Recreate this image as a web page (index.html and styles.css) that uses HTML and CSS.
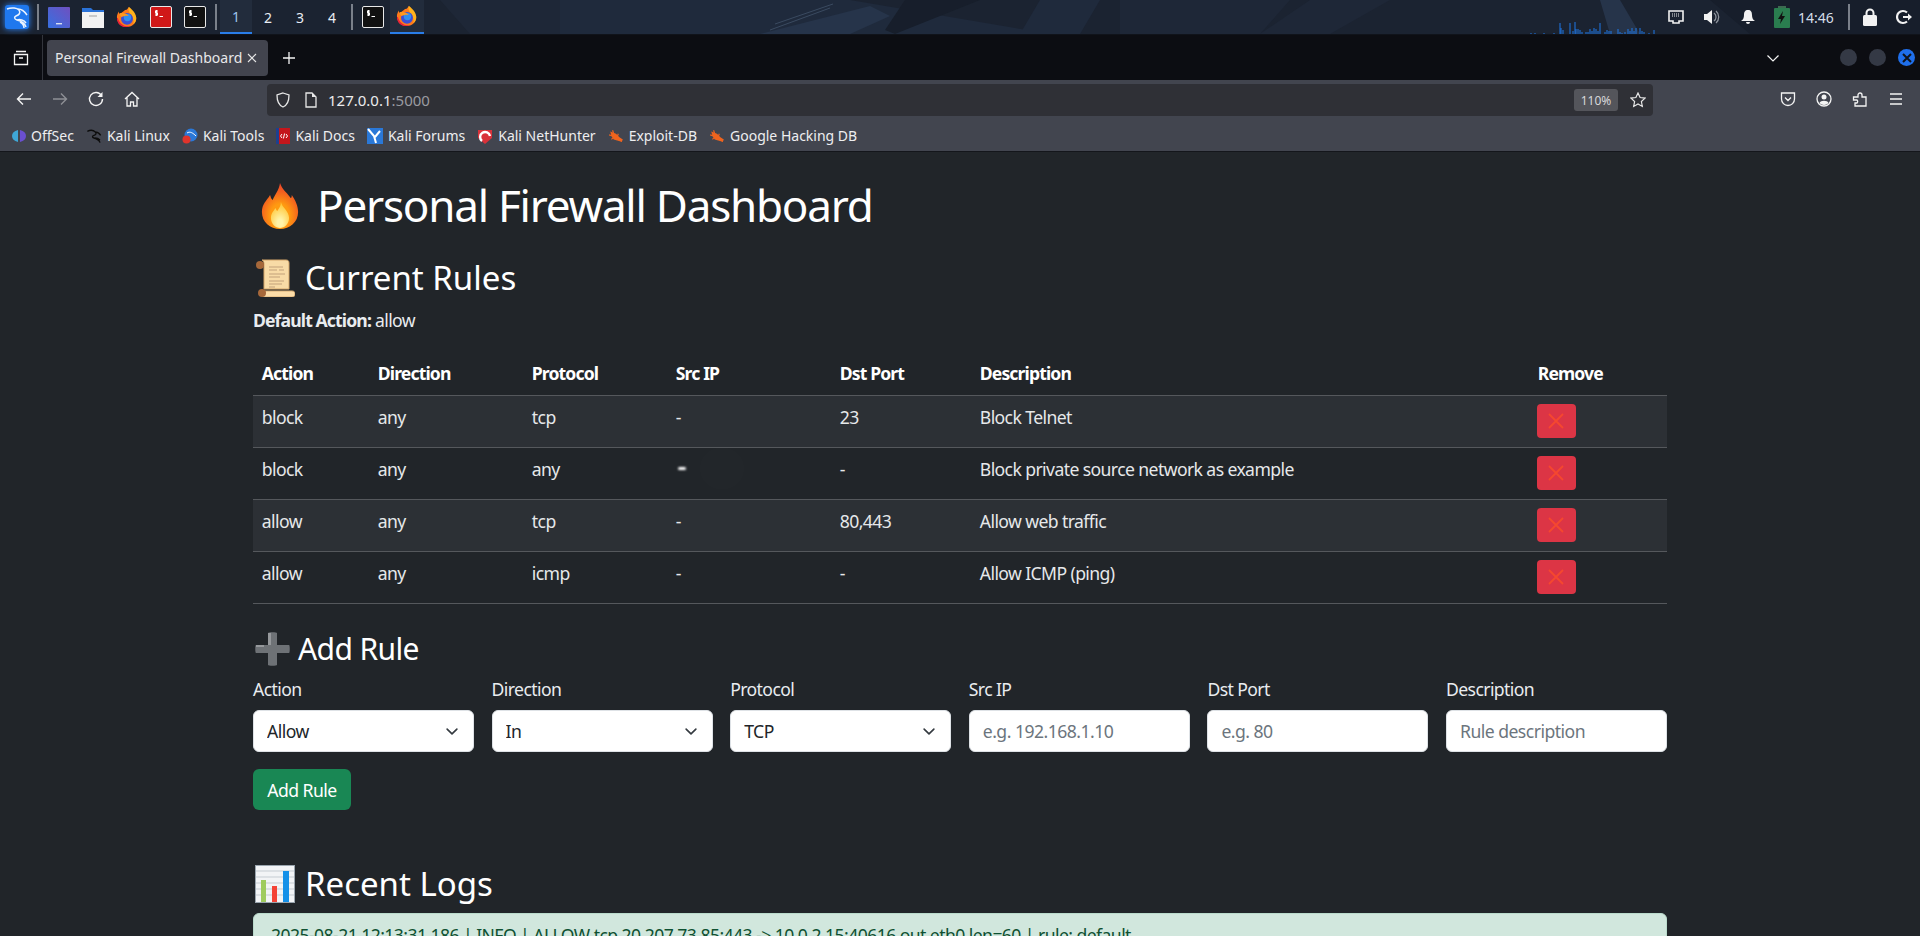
FILE: index.html
```html
<!DOCTYPE html>
<html lang="en">
<head>
  <meta charset="UTF-8" />
  <meta name="viewport" content="width=device-width, initial-scale=1.0"/>
  <title>Personal Firewall Dashboard</title>
  <link rel="stylesheet" href="styles.css">
</head>
<body>
  <svg class="defs" width="0" height="0">
    <symbol id="firefox" viewBox="0 0 24 24">
      <path fill="#ff7a1a" d="M14 1c3 2 2 4 4 6 2 2 3 3 4 5 1 6-4 11-10 11S1 19 1 12c0-2 1-4 2-6 0 2 1 3 2 3 1-3 4-3 5-5 1 1 3-1 4-3z"/>
      <path fill="#ffb21c" d="M14 1c4 3 8 7 8 12 0 3-1 5-3 7 1-5-1-9-4-12-1-2-2-5-1-7z"/>
      <path fill="#e8203c" d="M2 13c2 7 8 10 13 9-6 3-14-1-14-9z"/>
      <circle cx="12" cy="14" r="6.5" fill="#3c4fd6"/>
      <circle cx="12.5" cy="12.5" r="4" fill="#2f8ff0"/>
      <path fill="#ff9a1f" d="M4 8c3-1 8 0 10 3-3-1-5 0-8 1-1-1-2-2-2-4z"/>
    </symbol>
    <symbol id="term" viewBox="0 0 22 22">
      <rect x=".5" y=".5" width="21" height="21" rx="1.5" fill="currentColor" stroke="#e8e8e8"/>
      <path fill="none" stroke="#fff" stroke-width="1.2" d="M6.5 4v6M8 5H5.6v2h1.8v2H5M9.5 10.5h3.5"/>
    </symbol>
    <symbol id="x" viewBox="0 0 16 16">
      <path fill="none" stroke="#f5472f" stroke-width="1.800" d="M1 1l14 14M15 1L1 15"/>
    </symbol>
    <symbol id="bug" viewBox="0 0 14 14">
      <path fill="#f0641e" d="M2 3l5 2 3 3 3 2-1 2-4-1-3-1-2-3z"/>
      <path fill="none" stroke="#f0641e" d="M4 2l1 3M1 6l3 1M3 10l2-2M9 5l-1 3M12 12l-3-3"/>
    </symbol>
    <symbol id="dragon" viewBox="0 0 24 24">
      <path fill="none" stroke="currentColor" stroke-width="2" d="M2 5c4-2 9-2 12 1 2 2 1 4-2 5-3 1-3 3 0 4 4 1 8 3 9 7M14 6c3 0 6 2 8 5M13 15c3 0 6 1 8 3"/>
    </symbol>
  </svg>

  <div class="panel">
    <svg class="wallpaper" viewBox="0 0 1920 34" preserveAspectRatio="none">
      <rect width="1920" height="34" fill="#1b2331"/>
      <path fill="#1f2a3c" d="M560 0h240l-60 34H560zM740 0h110l200 34H720zM1040 0h60l-20 34h-60z"/>
      <path fill="#1e2737" d="M440 0h120v34H470zM1120 0h170l-30 34h-140zM1310 0h80l-60 34h-70z"/>
      <path fill="#26344a" d="M760 34l110-28 20 10-40 18zM1600 0h20l20 34h-30z"/>
      <path fill="#171e2b" d="M905 0h75l-20 8-65 26-10-4zM1710 0h210v34h-170z"/>
      <path fill="none" stroke="#3a4a60" d="M770 30l60-22M775 24l58-20"/>
    </svg>
    <button class="kali-btn">
      <svg width="24" height="24" viewBox="0 0 24 24"><rect width="24" height="24" rx="3" fill="#1f78ee"/><path fill="none" stroke="#eaf3ff" stroke-width="1.500" d="M2 4c5-2 10-1 12 1 2 3 0 5-3 6-2 1-2 3 1 4 4 1 8 3 9 7M13 4c4 0 7 3 9 6M12 15c3-1 7 0 9 3M15 17c2 1 4 3 4 6"/></svg>
    </button>
    <span class="panel-sep"></span>
    <span class="launcher">
      <svg width="22" height="22" viewBox="0 0 22 22"><defs><linearGradient id="desk" x1="0" x2="1" y1="1" y2="0"><stop offset="0" stop-color="#3770e0"/><stop offset="1" stop-color="#6f50c0"/></linearGradient></defs><rect width="22" height="21" y="1" rx="1" fill="url(#desk)"/><path fill="#d8e0f0" d="M8 17h6v1.400H8z"/></svg>
    </span>
    <span class="launcher">
      <svg width="22" height="22" viewBox="0 0 22 22"><path fill="#2a72d8" d="M0 2h9l2 2h11v6H0z"/><path fill="#f2f2f2" d="M0 6h22v16H0z"/><path fill="#c9c9c9" d="M7 9h8v2H7z"/></svg>
    </span>
    <span class="launcher"><svg width="22" height="22"><use href="#firefox"/></svg></span>
    <span class="launcher red"><svg width="22" height="22"><use href="#term"/></svg></span>
    <span class="launcher dark"><svg width="22" height="22"><use href="#term"/></svg></span>
    <span class="panel-sep"></span>
    <div class="workspaces">
      <span class="ws active">1</span>
      <span class="ws">2</span>
      <span class="ws">3</span>
      <span class="ws">4</span>
    </div>
    <span class="panel-sep"></span>
    <span class="launcher dark"><svg width="22" height="22"><use href="#term"/></svg></span>
    <span class="launcher current"><svg width="22" height="22"><use href="#firefox"/></svg></span>

    <div class="tray">
      <svg class="netgraph" width="125" height="12" viewBox="0 0 125 12">
        <path fill="none" stroke="#1f78e8" d="M1 11v1M5 11v1M14 11v1M24 11v1M30 1v11M31 6v6M33 8v4M40 1v11M43 9v3M45 0v12M46 7v5M48 7v5M50 8v4M52 10v2M56 10v2M58 10v2M60 7v5M62 9v3M64 6v6M66 7v5M68 9v3M70 1v11M75 10v2M77 8v4M79 9v3M81 9v3M88 7v5M90 10v2M92 11v1M95 10v2M98 7v5M100 9v3M102 6v6M104 9v3M106 6v6M110 6v6M112 9v3M114 10v2M119 11v1M124 8v4"/>
      </svg>
      <span class="tray-item">
        <svg width="16" height="16" viewBox="0 0 16 16"><path fill="none" stroke="#f2f2f2" stroke-width="1.600" d="M1 2h14v10h-4v2H5v-2H1z"/><path stroke="#f2f2f2" d="M4 5h8M4 7h8" stroke-dasharray="1 1"/></svg>
      </span>
      <span class="tray-item">
        <svg width="18" height="18" viewBox="0 0 18 18"><path fill="#f2f2f2" d="M1 6h3l5-4v14l-5-4H1z"/><path fill="none" stroke="#8d939c" stroke-width="1.300" d="M11 5a5 5 0 0 1 0 8M13 3a8 8 0 0 1 0 12"/></svg>
      </span>
      <span class="tray-item">
        <svg width="16" height="16" viewBox="0 0 16 16"><path fill="#f2f2f2" d="M8 1c3 0 4 2 4 5 0 3 1 5 3 6H1c2-1 3-3 3-6 0-3 1-5 4-5zM6 13h4a2 2 0 0 1-4 0z"/></svg>
      </span>
      <span class="tray-item batt">
        <svg width="16" height="22" viewBox="0 0 16 22"><path fill="#3d6a50" d="M4 0h8v2H4z"/><rect y="2" width="16" height="20" rx="1" fill="#2a7d4f"/><path fill="#111" d="M9 5l-5 8h3l-1 5 5-8H8z"/></svg>
      </span>
      <span class="clock">14:46</span>
      <span class="panel-sep tray-sep"></span>
      <span class="tray-item">
        <svg width="14" height="18" viewBox="0 0 14 18"><path fill="none" stroke="#f2f2f2" stroke-width="2" d="M3.500 8V5a3.500 3.500 0 0 1 7 0v3"/><rect y="7" width="14" height="11" rx="1.500" fill="#f2f2f2"/></svg>
      </span>
      <span class="tray-item last">
        <svg width="16" height="16" viewBox="0 0 16 16"><path fill="none" stroke="#f2f2f2" stroke-width="2.200" d="M11 3.500a6 6 0 1 0 0 9"/><path fill="#f2f2f2" d="M7 7h5V4.500L16 8l-4 3.500V9H7z"/></svg>
      </span>
    </div>
  </div>

  <div class="tabbar">
    <span class="tab-view">
      <svg width="16" height="16" viewBox="0 0 16 16"><path fill="none" stroke="#f4f4f4" stroke-width="1.300" d="M3 1.500h10M1.500 4.500h13v10h-13zM6 8h4"/></svg>
    </span>
    <div class="tab">
      <span class="tab-title">Personal Firewall Dashboard</span>
      <svg width="10" height="10" viewBox="0 0 10 10"><path fill="none" stroke="#e6e6e6" stroke-width="1.100" d="M1 1l8 8M9 1L1 9"/></svg>
    </div>
    <svg class="new-tab" width="14" height="14" viewBox="0 0 14 14"><path fill="none" stroke="#f4f4f4" stroke-width="1.300" d="M7 1v12M1 7h12"/></svg>
    <svg class="tab-list" width="14" height="14" viewBox="0 0 14 14"><path fill="none" stroke="#f4f4f4" stroke-width="1.200" d="M1.500 4.500L7 10l5.500-5.500"/></svg>
    <span class="win-btn"></span>
    <span class="win-btn"></span>
    <span class="win-btn close">
      <svg width="10" height="10" viewBox="0 0 10 10"><path fill="none" stroke="#10141c" stroke-width="2" d="M1 1l8 8M9 1L1 9"/></svg>
    </span>
  </div>

  <div class="navbar">
    <span class="nav-btn"><svg width="16" height="16" viewBox="0 0 16 16"><path fill="none" stroke="#f4f4f4" stroke-width="1.400" d="M15 8H2M7 2.500L1.500 8 7 13.500"/></svg></span>
    <span class="nav-btn"><svg width="16" height="16" viewBox="0 0 16 16"><path fill="none" stroke="#8e9096" stroke-width="1.400" d="M1 8h13M9 2.500L14.500 8 9 13.500"/></svg></span>
    <span class="nav-btn"><svg width="16" height="16" viewBox="0 0 16 16"><path fill="none" stroke="#f4f4f4" stroke-width="1.400" d="M13.500 4.500A6.500 6.500 0 1 0 14.500 8"/><path fill="#f4f4f4" d="M14.500 1v5h-5z"/></svg></span>
    <span class="nav-btn"><svg width="16" height="16" viewBox="0 0 16 16"><path fill="none" stroke="#f4f4f4" stroke-width="1.300" d="M1 8l7-6.500L15 8M3 6.500V15h3.500v-4h3v4H13V6.500"/></svg></span>
    <div class="urlbar">
      <svg class="url-shield" width="16" height="16" viewBox="0 0 16 16"><path fill="none" stroke="#e8e8e8" stroke-width="1.300" d="M8 1l6 2c0 6-1 10-6 12C3 13 2 9 2 3z"/></svg>
      <svg class="url-page" width="14" height="16" viewBox="0 0 14 16"><path fill="none" stroke="#e8e8e8" stroke-width="1.300" d="M2 1h6l4 4v10H2z"/><path fill="#e8e8e8" d="M8 1l4 4H8z"/></svg>
      <span class="url-text">127.0.0.1<span class="url-port">:5000</span></span>
      <span class="zoom-badge">110%</span>
      <svg class="url-star" width="16" height="16" viewBox="0 0 16 16"><path fill="none" stroke="#e8e8e8" stroke-width="1.200" d="M8 1l2.100 4.500 4.900.6-3.600 3.400.9 4.900L8 12l-4.300 2.400.9-4.900L1 6.100l4.900-.6z"/></svg>
    </div>
    <span class="nav-btn"><svg width="16" height="16" viewBox="0 0 16 16"><path fill="none" stroke="#f4f4f4" stroke-width="1.300" d="M1.500 2h13v6a6.500 6.500 0 0 1-13 0zM5 6.500L8 9.500l3-3"/></svg></span>
    <span class="nav-btn"><svg width="16" height="16" viewBox="0 0 16 16"><circle cx="8" cy="8" r="7" fill="none" stroke="#f4f4f4" stroke-width="1.300"/><circle cx="8" cy="6" r="2.500" fill="#f4f4f4"/><path fill="#f4f4f4" d="M3.500 12c1-3 8-3 9 0-2 2.500-7 2.500-9 0z"/></svg></span>
    <span class="nav-btn"><svg width="16" height="16" viewBox="0 0 16 16"><path fill="none" stroke="#f4f4f4" stroke-width="1.300" d="M1.500 6H6V4a2 2 0 0 1 4 0v2h4v9H3v-3h2a2 2 0 0 0 0-3H1.500z"/></svg></span>
    <span class="nav-btn"><svg width="16" height="16" viewBox="0 0 16 16"><path fill="none" stroke="#f4f4f4" stroke-width="1.300" d="M2 3h12M2 8h12M2 13h12"/></svg></span>
  </div>

  <div class="bookmarks">
    <span class="bm"><svg width="14" height="14" viewBox="0 0 14 14"><path fill="#3fa7d6" d="M6 1C2 2 0 4 0 7s2 5 6 6z"/><path fill="#6a4fd0" d="M8 1c4 1 6 3 6 6s-2 5-6 6z"/></svg>OffSec</span>
    <span class="bm"><svg width="16" height="16" class="bm-dark"><use href="#dragon"/></svg>Kali Linux</span>
    <span class="bm"><svg width="16" height="16" viewBox="0 0 16 16"><circle cx="9" cy="7" r="6.500" fill="#2a78d8"/><path fill="none" stroke="#fff" d="M5 5c3-2 6 0 9 3"/><circle cx="4.500" cy="11.500" r="4" fill="#e0342c"/></svg>Kali Tools</span>
    <span class="bm"><svg width="14" height="16" viewBox="0 0 14 16"><rect width="14" height="16" fill="#c4161c"/><rect width="3" height="16" fill="#1d3f8f"/><path fill="none" stroke="#fff" d="M6 6L4.500 8 6 10M10 6l1.500 2-1.500 2M8.600 5.500l-1.200 5"/></svg>Kali Docs</span>
    <span class="bm"><svg width="16" height="16" viewBox="0 0 16 16"><rect width="16" height="16" fill="#2a78d8"/><path fill="none" stroke="#fff" stroke-width="2" d="M1 1l6 7 2 7M13 3L8 9"/></svg>Kali Forums</span>
    <span class="bm"><svg width="16" height="16" viewBox="0 0 16 16"><path fill="#d9323a" d="M1 2l14 0v8l-7 6-7-6z"/><path fill="none" stroke="#fff" stroke-width="2.400" d="M5 13A5 5 0 1 1 13 8"/></svg>Kali NetHunter</span>
    <span class="bm"><svg width="16" height="16"><use href="#bug"/></svg>Exploit-DB</span>
    <span class="bm"><svg width="16" height="16"><use href="#bug"/></svg>Google Hacking DB</span>
  </div>

  <div class="container">
    <h1 class="page-title">
      <svg width="38" height="48" viewBox="0 0 42 48" preserveAspectRatio="none"><defs>
        <radialGradient id="flame" cx=".5" cy=".72" r=".75"><stop offset=".35" stop-color="#ff9a10"/><stop offset=".7" stop-color="#f4611e"/><stop offset="1" stop-color="#ea3e2e"/></radialGradient>
        <radialGradient id="core" cx=".5" cy=".8" r=".7"><stop offset=".2" stop-color="#fff3a8"/><stop offset="1" stop-color="#ffc73a"/></radialGradient>
      </defs>
        <path fill="url(#flame)" d="M21 1c2 6 7 9 11 14 1 2 2 1 2-2 4 5 7 11 7 17 0 10-9 17-20 17S1 40 1 30c0-8 5-11 9-17 1 2 1 4 3 5 2-5 7-10 8-17z"/>
        <path fill="url(#core)" d="M22 20c1 5 9 9 9 16 0 6-5 10-10 10s-10-4-10-10c0-5 3-7 5-10 1 2 1 2 2 3 2-3 4-5 4-9z"/>
      </svg>
      Personal Firewall Dashboard
    </h1>

    <h2 class="section-title rules-title">
      <svg width="40" height="38" viewBox="0 0 40 38">
        <path fill="#f8dba6" stroke="#d4a66a" d="M7 1h24c2 0 3 1 3 3v26H9V5c0-2-1-4-2-4z"/>
        <path fill="#fbdca8" stroke="#d9ae74" d="M6 32h31c2 0 3 1 3 3s-1 3-3 3H8z"/>
        <circle cx="5" cy="6" r="4" fill="#a6683a"/>
        <circle cx="7" cy="34" r="4" fill="#a6683a"/>
        <path fill="none" stroke="#c2a27a" stroke-width="1.200" d="M14 8h14M14 11h8M24 11h5M14 15h16M14 18h11M14 22h15M14 25h13M14 28h6"/>
      </svg>
      Current Rules
    </h2>
    <p class="default-action"><strong>Default Action:</strong> allow</p>

    <table class="rules">
      <colgroup>
        <col class="col-action"><col class="col-direction"><col class="col-protocol"><col class="col-src"><col class="col-port"><col class="col-desc"><col class="col-remove">
      </colgroup>
      <thead>
        <tr><th>Action</th><th>Direction</th><th>Protocol</th><th>Src IP</th><th>Dst Port</th><th>Description</th><th>Remove</th></tr>
      </thead>
      <tbody>
        <tr><td>block</td><td>any</td><td>tcp</td><td>-</td><td>23</td><td>Block Telnet</td><td><button class="btn-remove"><svg width="16" height="16"><use href="#x"/></svg></button></td></tr>
        <tr><td>block</td><td>any</td><td>any</td><td class="blurred"><span class="smudge"></span></td><td>-</td><td>Block private source network as example</td><td><button class="btn-remove"><svg width="16" height="16"><use href="#x"/></svg></button></td></tr>
        <tr><td>allow</td><td>any</td><td>tcp</td><td>-</td><td>80,443</td><td>Allow web traffic</td><td><button class="btn-remove"><svg width="16" height="16"><use href="#x"/></svg></button></td></tr>
        <tr><td>allow</td><td>any</td><td>icmp</td><td>-</td><td>-</td><td>Allow ICMP (ping)</td><td><button class="btn-remove"><svg width="16" height="16"><use href="#x"/></svg></button></td></tr>
      </tbody>
    </table>

    <h2 class="section-title add-title">
      <svg width="35" height="34" viewBox="0 0 35 34"><path fill="#6e7276" d="M13 1c0-1 9-1 9 0v12h12c1 0 1 8 0 8H22v12c0 1-9 1-9 0V21H1c-1 0-1-8 0-8h12z"/><path fill="#96999c" d="M13 1h3v12h-3zM1 13h8v2H1z"/></svg>
      Add Rule
    </h2>

    <form class="rule-form">
      <div class="field"><label>Action</label><select><option>Allow</option><option>Block</option></select></div>
      <div class="field"><label>Direction</label><select><option>In</option><option>Out</option></select></div>
      <div class="field"><label>Protocol</label><select><option>TCP</option><option>UDP</option></select></div>
      <div class="field"><label>Src IP</label><input type="text" placeholder="e.g. 192.168.1.10"></div>
      <div class="field"><label>Dst Port</label><input type="text" placeholder="e.g. 80"></div>
      <div class="field"><label>Description</label><input type="text" placeholder="Rule description"></div>
    </form>
    <button class="btn-add">Add Rule</button>

    <h2 class="section-title logs-title">
      <svg width="40" height="38" viewBox="0 0 40 38">
        <rect x=".5" y=".5" width="39" height="37" fill="#f2f4f6" stroke="#9aa5ae"/>
        <path stroke="#c5ccd2" d="M1 6h38M1 12h38M1 18h38M1 24h38M1 30h38"/>
        <rect x="6" y="15" width="5" height="22" fill="#9fcb5e"/>
        <rect x="17" y="21" width="5" height="16" fill="#f44336"/>
        <rect x="28" y="6" width="6" height="31" fill="#1490e8"/>
      </svg>
      Recent Logs
    </h2>
    <div class="log-line">2025-08-21 12:13:31,186 | INFO | ALLOW tcp 20.207.73.85:443 -&gt; 10.0.2.15:40616 out eth0 len=60 | rule: default</div>
  </div>
</body>
</html>
```

FILE: styles.css
```css
html, body {
  margin: 0;
  height: 936px;
  overflow: hidden;
}

body {
  font-family: "Noto Sans", sans-serif;
  background: #212529;
  color: #fff;
}

.defs {
  display: block;
}

/* desktop panel */
.panel {
  position: relative;
  height: 34px;
  display: flex;
  align-items: center;
  border-bottom: 1px solid #10131a;
}

.wallpaper {
  position: absolute;
  top: 0;
  left: 0;
  width: 100%;
  height: 100%;
}

.panel > *:not(.wallpaper) {
  position: relative;
}

.kali-btn {
  width: 34px;
  height: 34px;
  padding: 0;
  border: none;
  background: none;
  display: flex;
  align-items: center;
  justify-content: center;
}

.kali-btn svg {
  filter: drop-shadow(0 0 3px #2a86ff);
}

.panel-sep {
  width: 2px;
  height: 26px;
  background: #7a808a;
  margin: 0 3px;
}

.launcher {
  width: 34px;
  height: 34px;
  display: flex;
  align-items: center;
  justify-content: center;
  box-sizing: border-box;
}

.launcher.red {
  color: #d01818;
}

.launcher.dark {
  color: #111;
}

.launcher.current {
  background: rgba(80, 100, 130, 0.15);
  border-bottom: 2px solid #2a7de8;
}

.workspaces {
  display: flex;
}

.ws {
  width: 32px;
  height: 34px;
  box-sizing: border-box;
  display: flex;
  align-items: center;
  justify-content: center;
  font-size: 14px;
  color: #e8edf4;
}

.ws.active {
  color: #9fc4ec;
  background: rgba(80, 100, 130, 0.15);
  border-bottom: 2px solid #2a7de8;
}

.tray {
  margin-left: auto;
  display: flex;
  align-items: center;
  height: 34px;
}

.netgraph {
  align-self: flex-end;
  margin: 0 3px 0 0;
}

.tray-item {
  width: 36px;
  display: flex;
  align-items: center;
  justify-content: center;
}

.tray-item.batt {
  width: 32px;
}

.tray-item.last {
  width: 32px;
}

.clock {
  font-size: 14px;
  color: #d4dde8;
  width: 40px;
}

.tray-sep {
  height: 26px;
  margin: 0 2px 0 10px;
}

/* browser chrome */
.tabbar {
  height: 45px;
  background: #0c0d12;
  display: flex;
  align-items: center;
}

.tab-view {
  width: 42px;
  height: 45px;
  box-sizing: content-box;
  border-right: 1px solid #33353c;
  display: flex;
  align-items: center;
  justify-content: center;
}

.tab {
  margin-left: 4px;
  width: 221px;
  height: 36px;
  box-sizing: border-box;
  padding: 0 11px 0 8px;
  background: #42444e;
  border-radius: 4px;
  display: flex;
  align-items: center;
  justify-content: space-between;
  font-size: 14px;
  color: #e8e8ea;
}

.new-tab {
  margin-left: 14px;
}

.tab-list {
  margin-left: auto;
  margin-right: 60px;
}

.win-btn {
  width: 17px;
  height: 17px;
  border-radius: 50%;
  background: #343945;
  margin-right: 12px;
  display: flex;
  align-items: center;
  justify-content: center;
}

.win-btn.close {
  background: #1f6feb;
  margin-right: 5px;
}

.navbar {
  height: 36px;
  background: #42454f;
  display: flex;
  align-items: center;
  padding: 0 6px;
}

.nav-btn {
  width: 36px;
  margin-top: 2px;
  display: flex;
  align-items: center;
  justify-content: center;
}

.urlbar {
  margin: 4px 117px 0;
  flex: 1;
  height: 32px;
  background: #2f3036;
  border-radius: 4px;
  display: flex;
  align-items: center;
  font-size: 15px;
  color: #ececee;
}

.url-shield {
  margin-left: 8px;
}

.url-page {
  margin-left: 13px;
}

.url-text {
  margin-left: 10px;
  flex: 1;
}

.url-port {
  color: #9a9ba0;
}

.zoom-badge {
  background: #54555b;
  border-radius: 3px;
  font-size: 12px;
  height: 22px;
  width: 44px;
  display: flex;
  align-items: center;
  justify-content: center;
  color: #d8d8da;
}

.url-star {
  margin: 0 7px 0 12px;
}

.bookmarks {
  height: 36px;
  box-sizing: border-box;
  padding: 4px 0 0 12px;
  background: #42454f;
  border-bottom: 1px solid #14161b;
  display: flex;
  align-items: center;
  gap: 12px;
  font-size: 14px;
  color: #eeeef0;
}

.bm {
  display: flex;
  align-items: center;
  gap: 5px;
}

.bm-dark {
  color: #0c0c0c;
}

/* page */
.container {
  width: 1414px;
  margin: 0 auto;
  padding-top: 27px;
  letter-spacing: -0.6px;
}

.page-title {
  margin: 0 0 25px;
  font-size: 44px;
  font-weight: 400;
  letter-spacing: -1.22px;
  line-height: 53px;
  display: flex;
  align-items: center;
  gap: 18px;
  padding-left: 8px;
  height: 53px;
}

.section-title {
  margin: 0;
  font-size: 33px;
  font-weight: 400;
  letter-spacing: 0;
  line-height: 42px;
  height: 42px;
  display: flex;
  align-items: center;
  gap: 10px;
  padding-left: 2px;
}

.rules-title {
  margin: 0 0 8px;
}

.add-title {
  margin: 24px 0 6px;
  font-size: 30px;
  letter-spacing: -0.6px;
  gap: 8px;
}

.logs-title {
  margin: 53px 0 8px;
}

.default-action {
  margin: 0 0 17.6px;
  font-size: 17.6px;
  line-height: 26.4px;
  color: #e9ecef;
}

.default-action strong {
  letter-spacing: -0.88px;
}

.rules {
  width: 100%;
  border-collapse: collapse;
  table-layout: fixed;
  font-size: 17.6px;
  line-height: 26.4px;
}

.col-action { width: 116px; }
.col-direction { width: 154px; }
.col-protocol { width: 144px; }
.col-src { width: 164px; }
.col-port { width: 140px; }
.col-desc { width: 558px; }
.col-remove { width: 138px; }

.rules th {
  text-align: left;
  padding: 9px 8.8px 8.6px;
  font-weight: 700;
  letter-spacing: -0.88px;
  border-bottom: 1px solid #55585c;
}

.rules td {
  padding: 8.4px 8.8px 8.6px;
  vertical-align: top;
  color: #e6e8ea;
  border-bottom: 1px solid #55585c;
}

.rules tbody tr:nth-child(odd) td {
  background: #2c3035;
}

.btn-remove {
  width: 39px;
  height: 34px;
  padding: 0;
  border: none;
  border-radius: 4px;
  background: #dc3545;
  display: flex;
  align-items: center;
  justify-content: center;
  margin-left: -1px;
}

.smudge {
  display: inline-block;
  width: 8px;
  height: 3px;
  margin: 0 0 6px 2px;
  background: #fff;
  border-radius: 2px;
  filter: blur(1px);
  box-shadow: 40px 0 40px 24px rgba(255, 255, 255, 0.015);
}

.rule-form {
  display: grid;
  grid-template-columns: repeat(6, 1fr);
  column-gap: 17.6px;
}

.field label {
  display: block;
  font-size: 17.6px;
  line-height: 26.4px;
  margin-bottom: 8px;
  color: #e9ecef;
}

.field select,
.field input {
  display: block;
  width: 100%;
  height: 42px;
  box-sizing: border-box;
  border: 1px solid #dee2e6;
  border-radius: 6px;
  background-color: #fff;
  color: #212529;
  font-family: inherit;
  letter-spacing: -0.53px;
  font-size: 17.6px;
  padding: 0 13px;
  outline: none;
}

.field select {
  appearance: none;
  background-image: url("data:image/svg+xml,%3csvg xmlns='http://www.w3.org/2000/svg' viewBox='0 0 16 16'%3e%3cpath fill='none' stroke='%23343a40' stroke-linecap='round' stroke-linejoin='round' stroke-width='2' d='m2 5 6 6 6-6'/%3e%3c/svg%3e");
  background-repeat: no-repeat;
  background-position: right 12px center;
  background-size: 18px 13px;
}

.field input::placeholder {
  color: #6c757d;
}

.btn-add {
  display: block;
  margin-top: 17px;
  width: 98px;
  height: 41px;
  padding: 0;
  border: none;
  border-radius: 6px;
  background: #198754;
  color: #fff;
  font-family: inherit;
  letter-spacing: -0.53px;
  font-size: 17.6px;
}

.log-line {
  background: #d1e7dd;
  color: #0f5132;
  border: 1px solid #badbcc;
  border-radius: 6px;
  font-size: 17.6px;
  letter-spacing: -0.57px;
  line-height: 26.4px;
  padding: 8px 17px;
}
```
